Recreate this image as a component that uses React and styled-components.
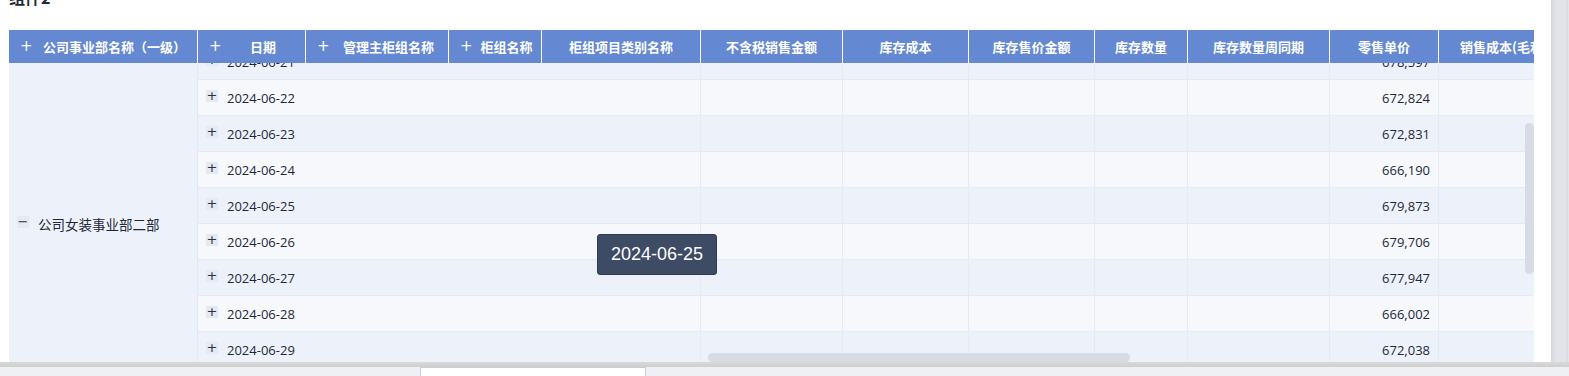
import React from 'react';
import styled, { createGlobalStyle } from 'styled-components';

const GlobalStyle = createGlobalStyle`
  html, body {
    margin: 0;
    padding: 0;
    background: #fff;
    font-family: "Open Sans", "Noto Sans CJK SC", sans-serif;
  }
`;

const COLS = '189px 108px 143px 93px 159px 142px 126px 126px 93px 142px 109px 131px';
const BODY_COLS = '503px 142px 126px 126px 93px 142px 109px 131px';

const Page = styled.div`
  width: 1569px;
  height: 376px;
  display: flex;
  flex-direction: column;
  overflow: hidden;
`;

const Main = styled.div`
  display: flex;
  height: 362px;
`;

const Panel = styled.div`
  flex: 1;
  background: #fff;
  padding: 0 17px 0 9px;
  display: flex;
  flex-direction: column;
  overflow: hidden;
`;

const TitleRow = styled.div`
  height: 29px;
  overflow: hidden;
`;

const Title = styled.div`
  margin-top: -13px;
  font-size: 16px;
  line-height: 20px;
  font-weight: 700;
  color: #1f2937;
  font-family: "Noto Sans CJK SC", sans-serif;
`;

const Grid = styled.div`
  position: relative;
  width: 1525px;
  height: 333px;
  overflow: hidden;
  background: #f6f8fc;
`;

const HeaderRow = styled.div`
  display: grid;
  grid-template-columns: ${COLS};
  height: 34px;
  position: relative;
  z-index: 2;
  background: #fff;
`;

const HeaderCell = styled.div`
  display: flex;
  align-items: center;
  background: #6488d2;
  color: #fff;
  font-family: "Noto Sans CJK SC", sans-serif;
  font-weight: 700;
  font-size: 13px;
  white-space: nowrap;
  overflow: hidden;
  border-right: 1px solid #fff;
  border-top: 1px solid #fff;
  padding-left: ${p => (p.$plus ? '11px' : '0')};
`;

const HeaderPlus = styled.span`
  font-size: 15px;
  font-weight: 400;
  width: 12px;
  font-family: "DejaVu Sans", sans-serif;
  line-height: 1;
`;

const HeaderText = styled.span`
  flex: 1;
  text-align: center;
`;

const Body = styled.div`
  display: flex;
  height: 299px;
  overflow: hidden;
`;

const MergedCell = styled.div`
  width: 189px;
  flex-shrink: 0;
  background: #edf2fa;
  border-right: 1px solid #e3e8f1;
  display: flex;
  align-items: center;
  padding: 22px 0 0 8px;
  box-sizing: border-box;
  font-family: "Noto Sans CJK SC", sans-serif;
  font-size: 13.5px;
  color: #1d2838;
`;

const Rows = styled.div`
  flex: 1;
  margin-top: -19px;
`;

const Row = styled.div`
  display: grid;
  grid-template-columns: ${BODY_COLS};
  height: 36px;
  box-sizing: border-box;
  border-bottom: 1px solid #e4e9f2;
  background: ${p => (p.$odd ? '#f6f8fc' : '#edf2fa')};
`;

const Cell = styled.div`
  display: flex;
  align-items: center;
  justify-content: ${p => (p.$right ? 'flex-end' : 'flex-start')};
  padding: ${p => (p.$right ? '0 8px 0 0' : '0 0 0 8px')};
  border-right: 1px solid #e6ebf3;
  font-size: 13px;
  color: #1d2838;
  white-space: nowrap;
  overflow: hidden;
`;

const Toggle = styled.span`
  display: inline-flex;
  align-items: center;
  justify-content: center;
  width: 12px;
  height: 12px;
  margin-right: 9px;
  background: #e5eaf2;
  color: #2a3344;
  font-family: "DejaVu Sans", sans-serif;
  font-size: 13px;
  line-height: 1;
  transform: translateY(-2px);
`;

const HScroll = styled.div`
  position: absolute;
  left: 699px;
  top: 324px;
  width: 422px;
  height: 9px;
  border-radius: 5px;
  background: #d6dbe4;
  z-index: 3;
`;

const VScroll = styled.div`
  position: absolute;
  left: 1516px;
  top: 94px;
  width: 9px;
  height: 151px;
  border-radius: 5px;
  background: #d6dbe4;
  z-index: 3;
`;

const Tooltip = styled.div`
  position: absolute;
  left: 588px;
  top: 205px;
  width: 120px;
  height: 41px;
  box-sizing: border-box;
  border: 1px solid #2f3b50;
  border-radius: 3px;
  background: #3d4b65;
  color: #fff;
  font-family: "Liberation Sans", Arial, sans-serif;
  font-size: 18px;
  display: flex;
  align-items: center;
  justify-content: center;
  z-index: 4;
`;

const SideStrip = styled.div`
  width: 18px;
  background: linear-gradient(to right, #d6d7dc 0, #e2e3e8 5px, #e4e5ea 15px, #d3d4d9 16px, #e4e5ea 17px);
`;

const BottomBar = styled.div`
  height: 14px;
  display: flex;
  flex-direction: column;
`;

const BottomEdge = styled.div`
  height: 5px;
  background: linear-gradient(to bottom, #d9d9d9, #cfcfcf);
`;

const Tabs = styled.div`
  flex: 1;
  background: #eef0f4;
  padding-left: 420px;
`;

const Tab = styled.div`
  width: 226px;
  height: 100%;
  background: #fff;
  border: 1px solid #c9ced6;
  border-bottom: none;
  box-sizing: border-box;
`;

const headers = [
  { label: '公司事业部名称（一级）', plus: true },
  { label: '日期', plus: true },
  { label: '管理主柜组名称', plus: true },
  { label: '柜组名称', plus: true },
  { label: '柜组项目类别名称' },
  { label: '不含税销售金额' },
  { label: '库存成本' },
  { label: '库存售价金额' },
  { label: '库存数量' },
  { label: '库存数量周同期' },
  { label: '零售单价' },
  { label: '销售成本(毛利)' },
];

const rows = [
  ['2024-06-21', '678,597'],
  ['2024-06-22', '672,824'],
  ['2024-06-23', '672,831'],
  ['2024-06-24', '666,190'],
  ['2024-06-25', '679,873'],
  ['2024-06-26', '679,706'],
  ['2024-06-27', '677,947'],
  ['2024-06-28', '666,002'],
  ['2024-06-29', '672,038'],
];

export default function App() {
  return (
    <Page>
      <GlobalStyle />
      <Main>
        <Panel>
          <TitleRow>
            <Title>组件2</Title>
          </TitleRow>
          <Grid>
            <HeaderRow>
              {headers.map(h => (
                <HeaderCell key={h.label} $plus={h.plus}>
                  {h.plus && <HeaderPlus>+</HeaderPlus>}
                  <HeaderText>{h.label}</HeaderText>
                </HeaderCell>
              ))}
            </HeaderRow>
            <Body>
              <MergedCell>
                <Toggle>−</Toggle>
                公司女装事业部二部
              </MergedCell>
              <Rows>
                {rows.map(([date, price], i) => (
                  <Row key={date} $odd={i % 2 === 1}>
                    <Cell>
                      <Toggle>+</Toggle>
                      {date}
                    </Cell>
                    <Cell />
                    <Cell />
                    <Cell />
                    <Cell />
                    <Cell />
                    <Cell $right>{price}</Cell>
                    <Cell />
                  </Row>
                ))}
              </Rows>
            </Body>
            <HScroll />
            <VScroll />
            <Tooltip>2024-06-25</Tooltip>
          </Grid>
        </Panel>
        <SideStrip />
      </Main>
      <BottomBar>
        <BottomEdge />
        <Tabs>
          <Tab />
        </Tabs>
      </BottomBar>
    </Page>
  );
}
